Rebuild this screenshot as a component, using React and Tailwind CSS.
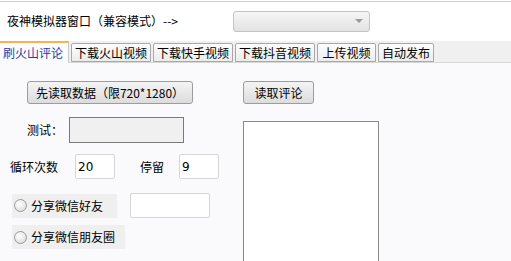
import React from "react";

const font = { fontFamily: '"Noto Sans CJK SC", "Noto Sans", sans-serif' };

function Tab({ children, active, w }) {
  if (active) {
    return (
      <div className={`h-[22px] ${w} shrink-0 border-t-2 border-t-[#f5b54a] border-r border-r-[#c8c8c8] bg-[#fbfbfd] text-[#1c3fa8] text-[12px] leading-[19px] pl-[3px] -mb-px z-10`}>
        {children}
      </div>
    );
  }
  return (
    <div className={`h-[19px] mt-[2px] ${w} shrink-0 ml-[2px] border border-[#a8a8a8] rounded-t-[2px] bg-[linear-gradient(#fdfdfd,#ececec)] text-[12px] leading-[17px] text-black text-center`}>
      {children}
    </div>
  );
}

function Radio({ label, w }) {
  return (
    <div className={`flex items-center h-[24px] ${w} bg-[#efefef] pl-[2px] gap-[4px]`}>
      <div className="w-[13px] h-[13px] rounded-full border border-[#9a9a9a] bg-[radial-gradient(circle_at_40%_35%,#ffffff,#d6d6d6)]" />
      <span className="text-[12px] text-black">{label}</span>
    </div>
  );
}

export default function App() {
  return (
    <div className="w-[511px] h-[261px] overflow-hidden bg-white relative" style={font}>
      <div className="h-[2px] border-t border-[#d0d0d0] mt-[1px]" />
      <div className="h-[38px] flex items-start">
        <div className="pl-[7px] pt-[9px] text-[12px] leading-[18px] text-black w-[233px]">夜神模拟器窗口（兼容模式）--&gt;</div>
        <div className="mt-[8px] w-[137px] h-[21px] border border-[#c4c4c4] rounded-[3px] bg-[linear-gradient(#f6f6f6,#e2e2e2)] flex items-center justify-end pr-[6px]">
          <svg width="8" height="5" viewBox="0 0 8 5"><path d="M0 0h8L4 4z" fill="#9a9a9a" /></svg>
        </div>
      </div>
      <div className="h-[22px] bg-[#f0f0f0] flex items-start border-b border-[#d8d8d8]">
        <Tab active w="w-[69px]">刷火山评论</Tab>
        <Tab w="w-[80px]">下载火山视频</Tab>
        <Tab w="w-[80px]">下载快手视频</Tab>
        <Tab w="w-[80px]">下载抖音视频</Tab>
        <Tab w="w-[59px]">上传视频</Tab>
        <Tab w="w-[56px]">自动发布</Tab>
      </div>
      <div className="bg-[#fafafd] h-[200px] flex">
        <div className="w-[243px] shrink-0 flex flex-col">
          <div className="mt-[18px] ml-[27px] w-[166px] h-[23px] border border-[#9c9c9c] rounded-[3px] bg-[linear-gradient(#f4f4f4,#dcdcdc)] text-[12px] leading-[21px] text-center text-black">先读取数据（限720*1280）</div>
          <div className="mt-[13px] flex items-center h-[26px]">
            <span className="ml-[27px] w-[42px] text-[12px] text-black">测试：</span>
            <div className="w-[115px] h-[26px] border border-[#7a7a7a] bg-[#f0f0f0]" />
          </div>
          <div className="mt-[11px] flex items-center h-[25px]">
            <span className="ml-[10px] w-[65px] text-[12px] text-black">循环次数</span>
            <div className="w-[40px] h-[25px] border border-[#d6d6d6] rounded-[2px] bg-white text-[12px] leading-[25px] pl-[2px]" style={{ fontFamily: '"DejaVu Sans", sans-serif' }}>20</div>
            <span className="ml-[25px] w-[39px] text-[12px] text-black">停留</span>
            <div className="w-[40px] h-[25px] border border-[#d6d6d6] rounded-[2px] bg-white text-[12px] leading-[25px] pl-[2px]" style={{ fontFamily: '"DejaVu Sans", sans-serif' }}>9</div>
          </div>
          <div className="mt-[14px] flex items-center ml-[12px] gap-[13px]">
            <Radio label="分享微信好友" w="w-[105px]" />
            <div className="w-[80px] h-[25px] border border-[#d6d6d6] rounded-[2px] bg-white" />
          </div>
          <div className="mt-[7px] ml-[12px]">
            <Radio label="分享微信朋友圈" w="w-[113px]" />
          </div>
        </div>
        <div className="flex flex-col">
          <div className="mt-[18px] w-[71px] h-[23px] border border-[#9c9c9c] rounded-[3px] bg-[linear-gradient(#f4f4f4,#dcdcdc)] text-[12px] leading-[21px] text-center text-black">读取评论</div>
          <div className="mt-[17px] w-[136px] h-[160px] border border-[#8a8a8a] bg-white" />
        </div>
      </div>
    </div>
  );
}
